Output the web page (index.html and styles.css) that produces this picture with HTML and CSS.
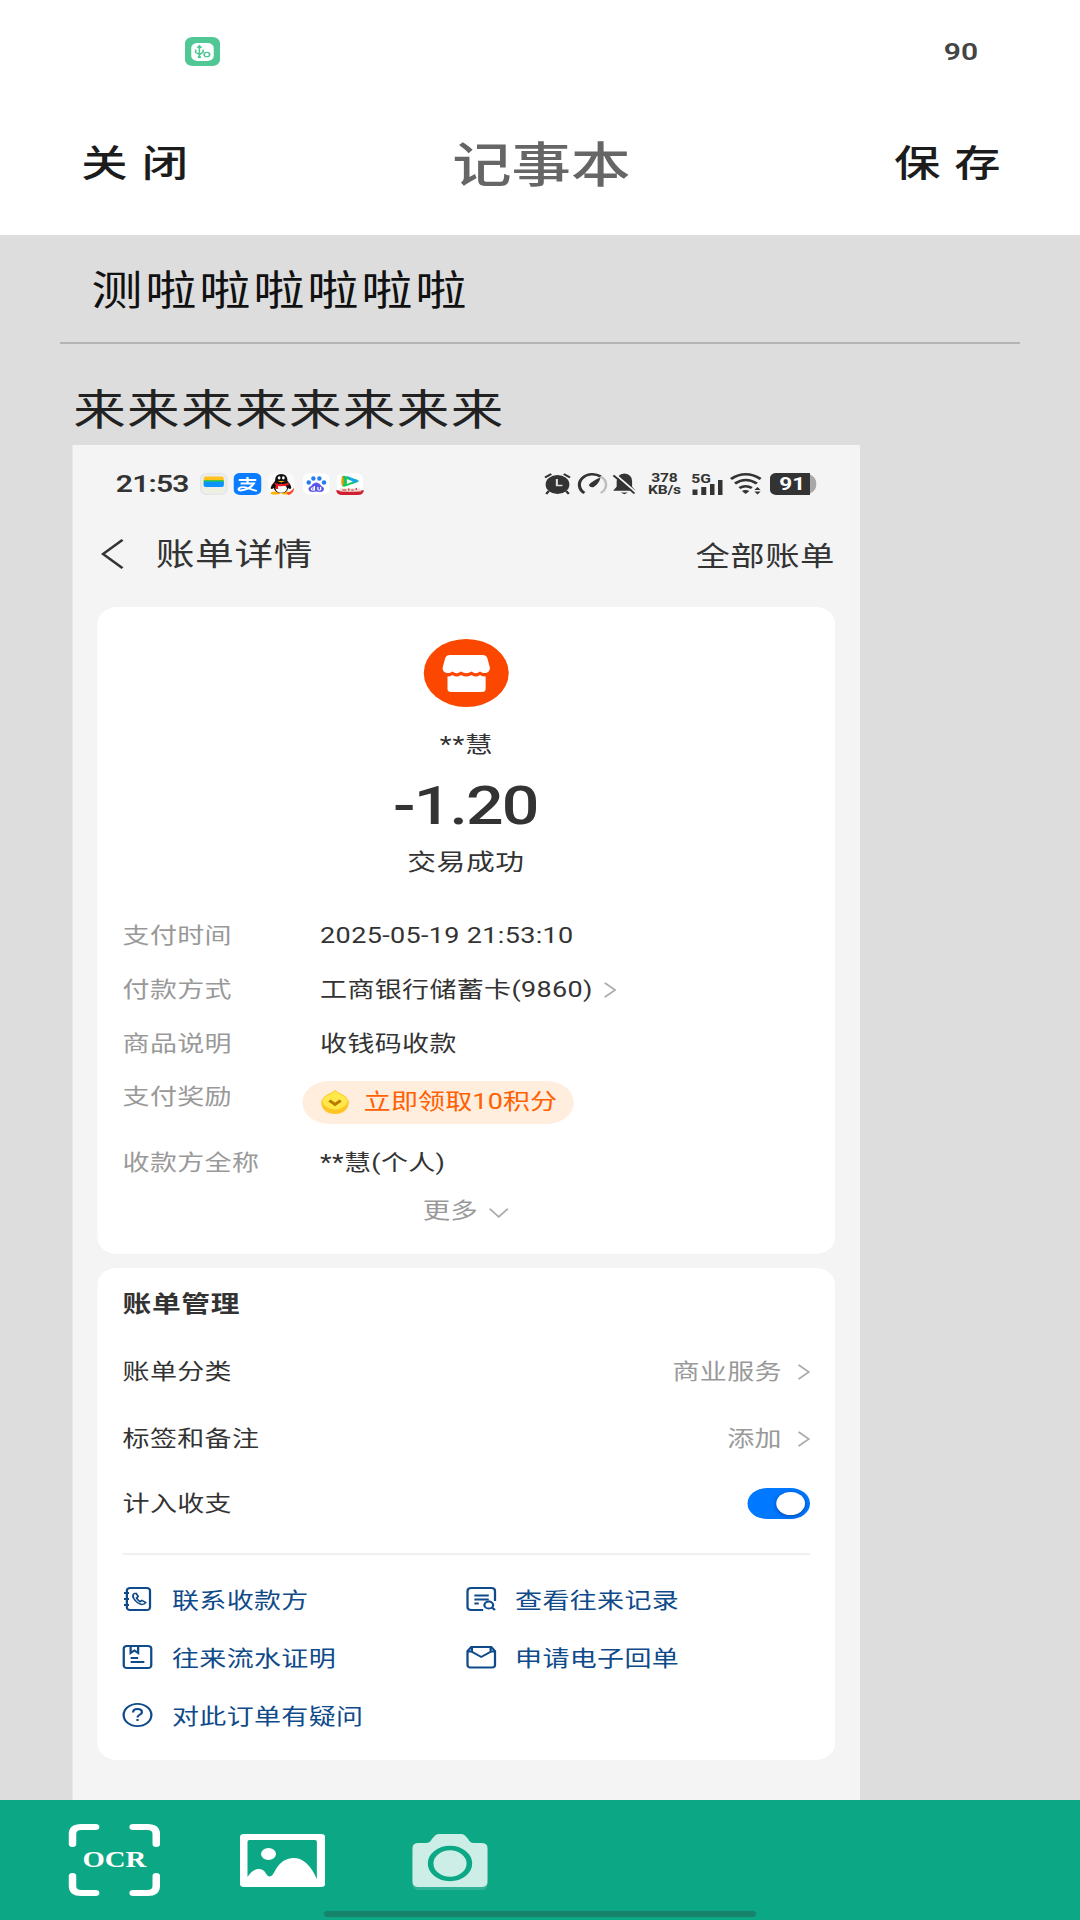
FILE: index.html
```html
<!DOCTYPE html>
<html lang="zh-CN">
<head>
<meta charset="utf-8">
<title>记事本</title>
<link rel="stylesheet" href="styles.css">
</head>
<body>
<div class="app">
  <div class="system-bar">
    <svg class="usb" viewBox="0 0 28 29"><rect width="28" height="29" rx="6" fill="#51c795"/><rect x="5" y="6" width="18" height="18" rx="5" fill="#fff"/><g fill="none" stroke="#51c795" stroke-width="1.3"><path d="M11.500 20.500V9M11.500 17.500L8.500 15.500V12.500M11.500 18L14.500 15V12.500M9.800 10.700L11.500 8.800L13.200 10.700"/><circle cx="17.500" cy="17.500" r="2.200"/><circle cx="11.500" cy="20" r=".7"/></g></svg>
    <span class="level">90</span>
  </div>
  <header class="header">
    <button class="action">关 闭</button>
    <h1 class="title">记事本</h1>
    <button class="action">保 存</button>
  </header>
  <main class="note">
    <div class="note-title">测啦啦啦啦啦啦</div>
    <div class="note-text">来来来来来来来来</div>
    <section class="shot">
      <div class="shot-bar">
        <span class="clock">21:53</span>
        <div class="apps">
          <svg viewBox="0 0 22 22"><rect x=".5" y=".5" width="21" height="21" rx="5" fill="#ececea" stroke="#e4e4e4"/><path d="M3 10V5.500q0-2 2-2h12q2 0 2 2V10z" fill="#ffc21a"/><path d="M3 7h16v5H3z" fill="#3cc83c"/><path d="M3 8.500h16v4q0 1.500-2 1.500H5q-2 0-2-1.500z" fill="#0a93ff"/><path d="M3 16h16v1q0 2-2 2H5q-2 0-2-2z" fill="#eef2dc"/></svg>
          <svg viewBox="0 0 22 22"><rect width="22" height="22" rx="5" fill="#0a7cff"/><path d="M4 7h14M11 4v6M5.500 10.500h10.500Q13 16.500 5.500 17.500Q3 17 4.500 15Q7 13 12 15.500L18.500 18" fill="none" stroke="#fff" stroke-width="1.8"/></svg>
          <svg viewBox="0 0 22 22"><rect x=".5" y=".5" width="21" height="21" rx="5" fill="#fafafa"/><ellipse cx="6.500" cy="20" rx="4" ry="1.600" fill="#ffb000"/><ellipse cx="15" cy="20" rx="4" ry="1.600" fill="#ffb000"/><path d="M11 1Q16 1 16 8Q19 12 19 15Q18 17 16.500 15Q16 20 11 20Q6 20 5 15Q3 17 2.500 15Q3 12 6 8Q6 1 11 1z" fill="#111"/><ellipse cx="11" cy="15.500" rx="4.500" ry="4.300" fill="#fff"/><ellipse cx="9.300" cy="4.800" rx="1.100" ry="1.600" fill="#fff"/><ellipse cx="12.700" cy="4.800" rx="1.100" ry="1.600" fill="#fff"/><path d="M8 8h6l-3 1.500z" fill="#ffb000"/><path d="M5 9.500Q11 13 17 9.500V12Q11 14 8.500 13V16H6.500V12z" fill="#f01820"/><path d="M15 20Q19 19 21 15Q22 19 17 22z" fill="#f8452c"/></svg>
          <svg viewBox="0 0 22 22"><rect x=".5" y=".5" width="21" height="21" rx="5" fill="#fff"/><g fill="#247cf0"><ellipse cx="5" cy="9.500" rx="1.800" ry="2.200"/><ellipse cx="8.700" cy="5.500" rx="1.800" ry="2.300"/><ellipse cx="13.500" cy="5.500" rx="1.800" ry="2.300"/><ellipse cx="17.200" cy="9.500" rx="1.800" ry="2.200"/></g><path d="M11 9.500Q14 10 15 13Q18.500 15 16.500 18Q15 19.500 11 18.500Q7 19.500 5.500 18Q3.500 15 7 13Q8 10 11 9.500z" fill="#5b55e8"/><path d="M9.500 13v4.500M12.300 14v2.500q1.500 1.500 2.200 0V14" fill="none" stroke="#fff" stroke-width="1"/><circle cx="8.300" cy="16" r="1.200" fill="none" stroke="#fff"/></svg>
          <svg viewBox="0 0 22 22"><rect x=".5" y=".5" width="21" height="21" rx="5" fill="#fff"/><path d="M6 4L16.500 8L6 12.500z" fill="#16c75a" stroke="#16c75a" stroke-width="2.500" stroke-linejoin="round"/><path d="M8 2.500L18 8L14 10z" fill="#16a5f5"/><path d="M5 3Q6 8 5 13Q4 9 5 3z" fill="#ff9500" stroke="#ff9500"/><path d="M8.500 6l4.800 2.500L8.500 11z" fill="#fff"/><path d="M0 17Q11 20 22 17Q22 22 17 22H5Q0 22 0 17z" fill="#cf1f30"/><path d="M3 15.500h16l1 3H3z" fill="#f1d8d0"/><path d="M5 17h3M10 15.500v2M12 17h2M16 15v2" stroke="#b73838"/></svg>
        </div>
        <div class="signals">
          <svg class="alarm" viewBox="0 0 22 22"><circle cx="11" cy="11.500" r="9.500" fill="#333"/><path d="M1 4.500L6 1M21 4.500L16 1M4 18l-2 3M18 18l2 3" stroke="#333" stroke-width="2"/><path d="M10.500 6v6.500H15" fill="none" stroke="#ddd" stroke-width="1.700"/></svg>
          <svg class="gauge" viewBox="0 0 24 22"><path d="M5.500 20A10 10 0 0 1 18.500 3.500" fill="none" stroke="#333" stroke-width="2.500"/><path d="M18.500 3.500A10 10 0 0 1 18.500 20" fill="none" stroke="#bdbdbd" stroke-width="2"/><path d="M18.500 4.500Q17 11 13 14Q10 15 9 12Q12 7.500 18.500 4.500z" fill="#333"/></svg>
          <svg class="bell" viewBox="0 0 20 22"><path d="M10 0q6.500 1 6.500 8v6l3 4H.5l3-4V8q0-7 6.500-8z" fill="#333"/><path d="M7 20h6l-3 1.700z" fill="#333"/><path d="M2.500 1L20 20" stroke="#f5f5f5" stroke-width="1.800"/><path d="M.8 2L18.500 21" stroke="#333" stroke-width="1.800"/></svg>
          <span class="speed">378<br>KB/s</span>
          <span class="cell"><span class="cell-name">5G</span><svg viewBox="0 0 24 15"><path d="M0 9.500h4V15H0zM7 7h4v8H7zM14 4h3.600v11H14zM20.400 0H24v15h-3.600z" fill="#333"/></svg></span>
          <svg class="wifi" viewBox="0 0 26 22"><g fill="none" stroke="#333" stroke-width="2.500"><path d="M.8 6Q12.500-3.500 24.500 6"/><path d="M4 10.500Q12.500 3.500 21.500 10.500"/><path d="M7.500 15Q12.500 11.500 17.500 15"/></g><path d="M9.500 18q3-2 6 0l-3 3z" fill="#333"/><path d="M19.500 17l2.500-3 2.500 3zM19.500 18.500l2.500 3 2.500-3z" fill="#333"/></svg>
          <span class="battery"><span class="battery-fill">91</span></span>
        </div>
      </div>
      <div class="shot-head">
        <svg class="back" viewBox="0 0 18 30"><path d="M17 .8L1.500 15L17 29.200" fill="none" stroke="#333" stroke-width="2.300"/></svg>
        <h2>账单详情</h2>
        <span class="all">全部账单</span>
      </div>
      <article class="card pay">
        <svg class="shop" viewBox="0 0 68 68"><circle cx="34" cy="34" r="34" fill="#fb4700"/><path d="M21 16h26q3 0 3.800 3l2 9q.6 3.500-2 5.500-3 1.500-5.800-1-3.200 3.500-6.800 0-4.200 3.500-8.400 0-3.600 3.500-6.800 0-2.800 2.500-5.800 1-2.600-2-2-5.500l2-9q.8-3 3.800-3z" fill="#fff"/><path d="M19 37.500q2.500 0 4-1.500 3.200 3 6.800 0 4.200 3 8.400 0 3.600 3 6.800 0 1.500 1.500 4.500 1.500V50q0 3-3 3h-24.500q-3 0-3-3z" fill="#fff"/></svg>
        <div class="payee">**慧</div>
        <div class="amount">-1.20</div>
        <div class="state">交易成功</div>
        <dl class="facts">
          <dt>支付时间</dt><dd class="time">2025-05-19 21:53:10</dd>
          <dt>付款方式</dt><dd>工商银行储蓄卡(9860)<svg class="arrow" viewBox="0 0 10 16"><path d="M.8.8L9 8L.8 15.200" fill="none" stroke="#aaa" stroke-width="1.600"/></svg></dd>
          <dt>商品说明</dt><dd>收钱码收款</dd>
          <dt>支付奖励</dt><dd class="bonus"><span class="pill"><svg viewBox="0 0 22 24"><path d="M11 0q2 2.500 6 4.500Q22 8 22 13q-1 10.500-11 11Q1 23.500 0 13 0 8 5 4.500 9 2.500 11 0z" fill="#ffc526"/><path d="M11 1q2 2.500 6 4.500Q21 8 21 12q-2 7-10 7.500Q3 19 1 12 1 8 5 5.500 9 3.500 11 1z" fill="#ffe94a"/><path d="M6.500 10.500L11 14.500l4.500-4" fill="none" stroke="#b87a00" stroke-width="2.800"/></svg>立即领取10积分</span></dd>
          <dt class="full">收款方全称</dt><dd class="full">**慧(个人)</dd>
        </dl>
        <div class="more">更多<svg viewBox="0 0 16 10"><path d="M.7.8L8 8.800L15.300.8" fill="none" stroke="#aaa" stroke-width="1.500"/></svg></div>
      </article>
      <article class="card manage">
        <h3>账单管理</h3>
        <div class="row">账单分类<span class="value">商业服务<svg class="arrow" viewBox="0 0 10 16"><path d="M.8.8L9 8L.8 15.200" fill="none" stroke="#aaa" stroke-width="1.600"/></svg></span></div>
        <div class="row">标签和备注<span class="value">添加<svg class="arrow" viewBox="0 0 10 16"><path d="M.8.8L9 8L.8 15.200" fill="none" stroke="#aaa" stroke-width="1.600"/></svg></span></div>
        <div class="row last">计入收支<span class="switch"></span></div>
        <nav class="links">
          <a><svg viewBox="0 0 24 24"><g><rect x="3.500" y="1" width="18.500" height="22" rx="2.500"/><path d="M1.200 6h4M1.200 12h4M1.200 18h4"/><path d="M9.500 6.500Q7.500 8 9 11.500Q12 17 15.500 17.500Q17.500 17.500 18.500 15.500L15.500 13.500L14 14.700Q12 13 11.300 11L12.500 9.500L11 6.500z" stroke-width="1.500"/></g></svg>联系收款方</a>
          <a><svg viewBox="0 0 24 24"><g><path d="M13.500 23H4Q1 23 1 20V4Q1 1 4 1H20Q23 1 23 4V14M6.500 8.500H18M6.500 12.500H18M6.500 16.500H10"/><circle cx="18" cy="18" r="3.500"/><path d="M20.500 20.500L23 23"/></g></svg>查看往来记录</a>
          <a><svg viewBox="0 0 24 24"><g><rect x="1" y="1" width="22" height="22" rx="2.500"/><path d="M6.500 1V8L9.500 5.500L12.500 8V1M6.500 13H12.500M6.500 17H17.500"/></g></svg>往来流水证明</a>
          <a><svg viewBox="0 0 24 24"><g><path d="M4 2H20L23 6V20Q23 22.500 20.500 22.500H3.500Q1 22.500 1 20V6zM1 6.500H4L12 12L20 6.500H23M4.500 2V6.500M19.500 2V6.500"/></g></svg>申请电子回单</a>
          <a><svg viewBox="0 0 24 24"><g><circle cx="12" cy="12" r="11.100"/><path d="M8.500 9.500Q8.500 6 12 6Q15.500 6 15.500 9Q15.500 11 13.500 12Q12 13 12 14.500M12 16V18"/></g></svg>对此订单有疑问</a>
        </nav>
      </article>
    </section>
  </main>
  <footer class="tools">
    <span class="ocr"><svg viewBox="0 0 73 72"><path d="M21.500 3H10Q3 3 3 10V20M51.500 3H63Q70 3 70 10V20M21.500 69H10Q3 69 3 62V52M51.500 69H63Q70 69 70 62V52" fill="none" stroke="#fff" stroke-width="6" stroke-linecap="round"/></svg><b>OCR</b></span>
    <svg class="photo" viewBox="0 0 68 53"><path fill-rule="evenodd" d="M3 0H65Q68 0 68 3V50Q68 53 65 53H3Q0 53 0 50V3Q0 0 3 0zM7.500 6Q6 6 6 7.500V43Q10 35 15 35Q19 35 21 40Q24 46 27.500 38Q33 24 43 24Q54 24 61.500 45V7.500Q61.500 6 60 6z" fill="#fff"/><circle cx="22.800" cy="20" r="6" fill="#fff"/></svg>
    <svg class="camera" viewBox="0 0 60 56"><path d="M4 12H55Q60 12 60 17V50Q60 56 55 56H5Q0 56 0 50V17z" fill="#2fb295"/><path fill-rule="evenodd" d="M5 9H11Q14 9 15.500 5L18 1.500Q19 0 21 0H39Q41 0 42 1.500L44.500 5Q46 9 49 9H55Q60 9 60 14V48Q60 53 55 53H5Q0 53 0 48V14Q0 9 5 9z" fill="#cdeee6"/><circle cx="30" cy="29.500" r="15.500" fill="none" stroke="#0ca784" stroke-width="4.500"/></svg>
    <i class="home"></i>
  </footer>
</div>
</body>
</html>
```
FILE: styles.css
```css
* { box-sizing: border-box; margin: 0; padding: 0; }
html { overflow: hidden; background: #fff; }
body { width: 1080px; height: 1920px; overflow: hidden; font-family: Roboto, "Noto Sans CJK SC", sans-serif; color: #333; }
svg { display: block; flex: none; overflow: visible; }

/* the 864px layout is stretched to fill the 1080px display */
.app { width: 864px; height: 1920px; display: flex; flex-direction: column; transform: scaleX(1.25); transform-origin: 0 0; }

.system-bar { height: 103px; padding: 0 81.500px 0 147.500px; display: flex; justify-content: space-between; align-items: center; }
.usb { width: 28px; height: 29px; }
.level { padding-top: 1px; font-size: 24px; font-weight: 600; line-height: 30px; color: #444; }

.header { height: 132px; padding: 0 63px 10px 65px; display: flex; justify-content: space-between; align-items: center; }
.action { border: 0; background: none; font: 500 37px/60px "Noto Sans CJK SC", sans-serif; color: #1c1c1c; letter-spacing: .5px; word-spacing: 2px; margin-top: -7px; }
.title { font: 500 47.500px/60px "Noto Sans CJK SC", sans-serif; color: #666; margin-top: -4px; }

.note { flex: none; height: 1565px; background: #ddd; overflow: hidden; }
.note-title { height: 109px; margin: 0 48px; padding-left: 25px; border-bottom: 2px solid #b4b4b4; font: 400 41px/104px "Noto Sans CJK SC", sans-serif; letter-spacing: 2.200px; color: #111; }
.note-text { height: 101px; padding-left: 58.500px; font: 400 42px/126px "Noto Sans CJK SC", sans-serif; letter-spacing: 1.150px; color: #222; }

.shot { width: 630.400px; height: 1355px; margin-left: 57.600px; padding: 0 20px; background: #f4f4f4; }
.shot-bar { height: 77px; padding: 0 15px 0 15px; display: flex; align-items: center; }
.clock { width: 67px; font-size: 24px; line-height: 30px; font-weight: 600; letter-spacing: -.600px; }
.apps { display: flex; gap: 5.400px; }
.apps svg { width: 22px; height: 22px; }
.signals { margin-left: auto; display: flex; align-items: center; }
.alarm { width: 22px; height: 22px; margin-right: 5px; }
.gauge { width: 24px; height: 22px; margin-right: 4px; }
.bell { width: 19px; height: 22px; margin-right: 8.500px; }
.speed { width: 27px; margin-right: 8px; font-size: 12.500px; line-height: 12px; font-weight: 700; text-align: center; white-space: nowrap; letter-spacing: -.200px; }
.cell { width: 25px; margin-right: 6px; display: flex; flex-direction: column; align-items: flex-end; }
.cell-name { align-self: flex-start; height: 7px; font-size: 12.500px; line-height: 11px; font-weight: 700; }
.cell svg { width: 24px; height: 15px; }
.wifi { width: 26px; height: 22px; margin-right: 6.500px; }
.battery { width: 36.500px; height: 22px; padding-right: 5px; border-radius: 6px 10px 10px 6px; background: #a8a8a8; }
.battery-fill { display: block; height: 22px; border-radius: 5px 0 0 5px; background: #333; color: #fff; font-size: 18px; line-height: 22px; font-weight: 700; text-align: center; padding-left: 3px; }
.shot-head { height: 85px; padding: 0 0 21px 3px; display: flex; align-items: center; }
.back { width: 18px; height: 30px; margin-right: 26px; }
.shot-head h2 { padding-top: 2px; font-size: 31px; line-height: 40px; font-weight: 400; letter-spacing: .500px; }
.all { margin-left: auto; padding-top: 5px; font-size: 27.500px; line-height: 40px; letter-spacing: .400px; }

.card { border-radius: 16px; background: #fff; padding: 0 16.500px 0 20.500px; }
.pay { height: 647px; margin-bottom: 14px; padding: 32px 18.500px 0 20.500px; display: flex; flex-direction: column; align-items: center; }
.shop { width: 68px; height: 68px; margin-right: 2px; }
.payee { margin: 23px 1px 0 0; font-size: 22px; line-height: 30px; letter-spacing: .700px; }
.amount { margin: 14px 3px 0 0; font-size: 53px; line-height: 64px; font-weight: 500; letter-spacing: -1.500px; }
.state { margin: 5px 2px 0 0; font-size: 23px; line-height: 40px; letter-spacing: .500px; }
.facts { align-self: stretch; margin-top: 26px; display: grid; grid-template-columns: 158px 1fr; grid-template-rows: 54px 54px 53px 54px 66px; font-size: 21.600px; line-height: 54px; letter-spacing: .270px; }
.facts dt { color: #999; }
.facts dd { display: flex; align-items: center; white-space: nowrap; height: 54px; }
.facts .full { align-self: end; }
.arrow { width: 10px; height: 16px; margin-left: 9px; }
.facts .bonus { margin-left: -14px; padding-top: 10px; }
.pill { width: 217px; height: 43px; padding-left: 15px; border-radius: 22px; background: #ffeddd; color: #ff6000; display: flex; align-items: center; letter-spacing: .100px; }
.pill svg { width: 22px; height: 24px; margin-right: 12px; }
.more { margin: 4px 2px 0 0; display: flex; align-items: center; font-size: 22px; line-height: 34px; color: #999; }
.more svg { width: 16px; height: 10px; margin: 4px 0 0 9px; }

.manage { height: 492px; padding-top: 16px; }
.manage h3 { margin-bottom: 6px; font-size: 23px; line-height: 42px; font-weight: 700; letter-spacing: .500px; }
.row { height: 67px; padding: 12px 3.500px 0 0; display: flex; align-items: center; justify-content: space-between; font-size: 21.600px; line-height: 54px; letter-spacing: .270px; }
.value { display: flex; align-items: center; color: #999; }
.value .arrow { margin-left: 12.500px; }
.row.last { height: 87px; padding: 0 3.500px 12px 0; }
.switch { width: 50px; height: 31px; padding: 4px; border-radius: 16px; background: #0078ff; display: flex; justify-content: flex-end; }
.switch::after { content: ""; width: 23px; height: 23px; border-radius: 50%; background: #fff; box-shadow: 0 1px 4px #0046a0; }
.links { margin: 0 3.500px 0 0; padding-top: 14px; border-top: 2px solid #f0f0f0; display: grid; grid-template-columns: 274.500px 1fr; grid-auto-rows: 58px; font-size: 21.600px; letter-spacing: .270px; color: #0f4a8a; }
.links a { display: flex; align-items: center; white-space: nowrap; }
.links svg { width: 24px; height: 24px; margin: 1px 15.500px 0 0; }
.links g { fill: none; stroke: #0f4a8a; stroke-width: 1.800; }

.tools { position: relative; height: 120px; background: #0ca784; padding: 0 55px; display: flex; align-items: flex-start; }
.ocr { width: 73px; height: 72px; margin-top: 24px; display: grid; }
.ocr > * { grid-area: 1 / 1; }
.ocr b { place-self: center; font: 700 23px/24px "Liberation Serif", serif; color: #fff; }
.photo { width: 68px; height: 53px; margin: 34px 0 0 64px; }
.camera { width: 60px; height: 56px; margin: 34px 0 0 70px; }
.home { position: absolute; left: 259px; top: 111px; width: 346px; height: 6px; border-radius: 3px; background: #18836b; }
```
